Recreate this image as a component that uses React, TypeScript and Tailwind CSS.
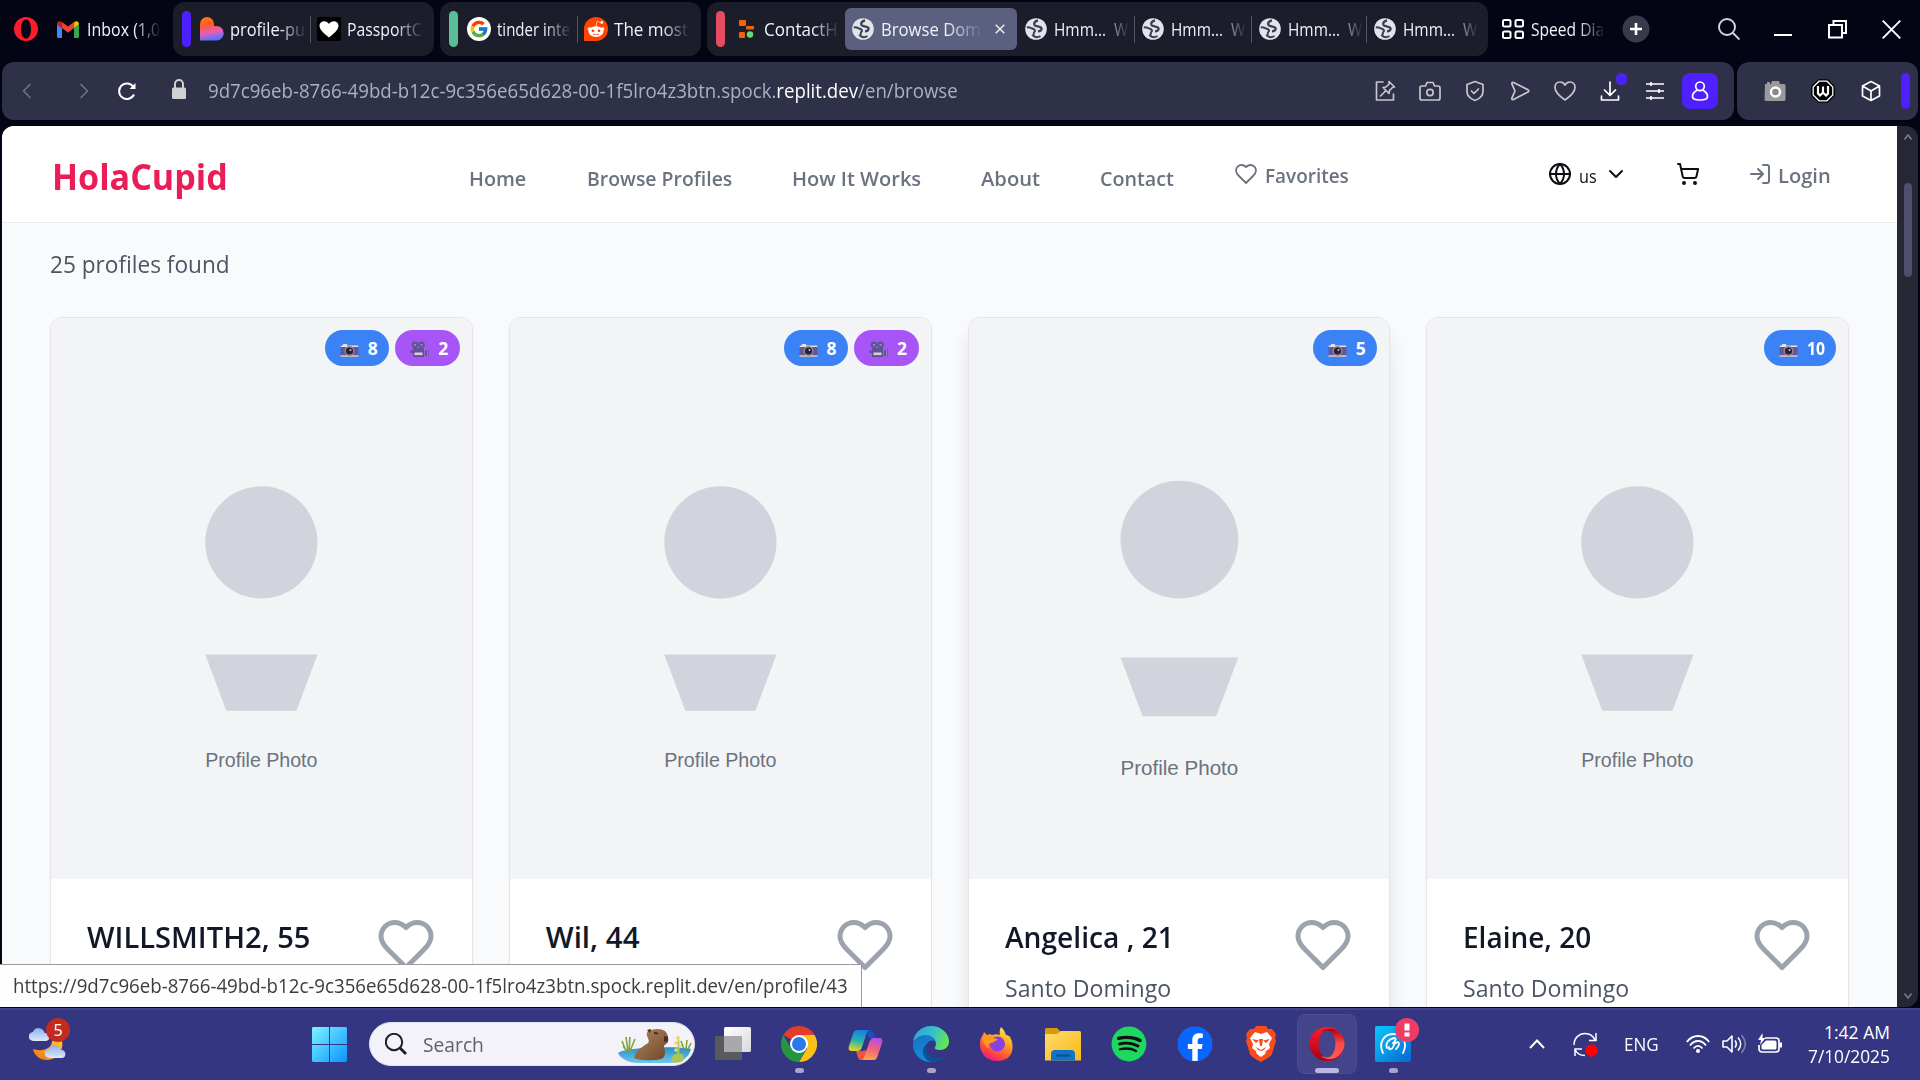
import { useLayoutEffect, useRef, useState, type ReactNode } from "react";
import { FcGoogle } from "react-icons/fc";
import { FaSpotify, FaFacebook, FaRedditAlien } from "react-icons/fa";

/* Single line of text, condensed or stretched to the width of its box. */
function Fit({ className = "", children }: { className?: string; children: ReactNode }) {
  const box = useRef<HTMLDivElement>(null);
  const line = useRef<HTMLSpanElement>(null);
  const [ratio, setRatio] = useState(1);
  useLayoutEffect(() => {
    const measure = () => {
      if (box.current && line.current && line.current.offsetWidth > 0) {
        setRatio(box.current.clientWidth / line.current.offsetWidth);
      }
    };
    measure();
    const observer = new ResizeObserver(measure);
    if (box.current) observer.observe(box.current);
    if (line.current) observer.observe(line.current);
    window.addEventListener("load", measure);
    return () => {
      observer.disconnect();
      window.removeEventListener("load", measure);
    };
  }, []);
  return (
    <div ref={box} className={`shrink-0 ${className}`}>
      <span ref={line} className="inline-block origin-left whitespace-pre align-top" style={{ transform: `scaleX(${ratio})` }}>
        {children}
      </span>
    </div>
  );
}

function TabText({ className, children }: { className: string; children: ReactNode }) {
  return (
    <Fit
      className={`${className} text-[17.5px] leading-6 text-[#f1f2f6] [mask-image:linear-gradient(to_right,#000_65%,transparent_102%)]`}
    >
      {children}
    </Fit>
  );
}

function Sep({ className }: { className: string }) {
  return <div className={`h-[27px] w-px shrink-0 bg-[#55565f] ${className}`} />;
}

function OperaMark({ className }: { className: string }) {
  return (
    <svg viewBox="0 0 24 24" className={`shrink-0 ${className}`}>
      <path
        fillRule="evenodd"
        fill="#ff1b2d"
        d="M12 0a12 12 0 1 0 0 24 12 12 0 0 0 0-24zm0 2.4c3 0 5 4.2 5 9.6s-2 9.6-5 9.6S7 17.4 7 12s2-9.600 5-9.600z"
      />
    </svg>
  );
}

function Globe() {
  return (
    <svg viewBox="0 0 22 22" className="h-[22px] w-[22px] shrink-0">
      <circle cx="11" cy="11" r="10.800" fill="#e3e4ea" />
      <path
        d="M13 2.500C10 3 8.500 5 9.500 7c1 1.800 6 .8 7 3.300.5 1.700-1.500 3-3.500 3"
        fill="none"
        stroke="#3b4058"
        strokeWidth="2.400"
      />
      <path d="M1.800 9.500c2.700-.8 4 .6 6 1.200 2.200.7 3 2 1.500 3.300-.8 1-.3 2.500-1.300 3.500 2 2 5 2 7.500.5" fill="none" stroke="#3b4058" strokeWidth="2" />
    </svg>
  );
}

function TabStrip() {
  return (
    <div className="flex h-[58px] items-center">
      <OperaMark className="ml-[14px] h-6 w-6" />
      <svg viewBox="0 0 22 17" className="ml-[19px] h-[17px] w-[22px] shrink-0">
        <path d="M0 3v12.500A1.500 1.500 0 0 0 1.500 17H5V7z" fill="#4285f4" />
        <path d="M22 3v12.500a1.500 1.500 0 0 1-1.500 1.500H17V7z" fill="#34a853" />
        <path d="M17 7l5-3.700C22 .5 19.500-.8 17.200.9z" fill="#fbbc04" />
        <path d="M5 7L0 3.300C0 .5 2.500-.8 4.800.9z" fill="#c5221f" />
        <path d="M5 7V1l6 4.600L17 1v6l-6 4.700z" fill="#ea4335" />
      </svg>
      <TabText className="ml-2 w-[73px]">Inbox (1,0</TabText>

      <div className="ml-[13px] flex h-[54px] w-[261px] shrink-0 items-center rounded-xl bg-[#1b1d2b]">
        <div className="ml-[9px] h-9 w-[9px] shrink-0 rounded-full bg-[#4f20ff]" />
        <svg viewBox="0 0 24 24" className="ml-[9px] h-6 w-6 shrink-0">
          <defs>
            <linearGradient id="lov" x1=".3" y1="0" x2=".5" y2="1">
              <stop offset="0" stopColor="#ff7a00" />
              <stop offset=".35" stopColor="#ff5a3c" />
              <stop offset=".65" stopColor="#e85fb5" />
              <stop offset="1" stopColor="#4b73ff" />
            </linearGradient>
          </defs>
          <path d="M0 7a7 7 0 0 1 14 0v2h2.500a7 7 0 0 1 0 14.500H0z" fill="url(#lov)" />
        </svg>
        <TabText className="ml-[6px] w-[75px]">profile-pu</TabText>
        <Sep className="ml-[5px]" />
        <svg viewBox="0 0 24 24" className="ml-[6px] h-6 w-6 shrink-0">
          <rect width="24" height="24" rx="2" fill="#000" />
          <path d="M12 20.500C5 15 2.500 12 2.500 8.500 2.500 3.500 9.500 2.500 12 7c2.500-4.500 9.500-3.500 9.500 1.500 0 3.500-2.500 6.500-9.500 12z" fill="#fff" />
        </svg>
        <TabText className="ml-[6px] w-[75px]">PassportC</TabText>
      </div>

      <div className="ml-[6px] flex h-[54px] w-[261px] shrink-0 items-center rounded-xl bg-[#1b1d2b]">
        <div className="ml-[9px] h-9 w-[9px] shrink-0 rounded-full bg-[#59c096]" />
        <div className="ml-[9px] flex h-6 w-6 shrink-0 items-center justify-center rounded-full bg-white">
          <FcGoogle size={20} />
        </div>
        <TabText className="ml-[6px] w-[73px]">tinder inte</TabText>
        <Sep className="ml-[7px]" />
        <div className="ml-[6px] flex h-6 w-6 shrink-0 items-center justify-center rounded-full rounded-bl-sm bg-[#ff4500]">
          <FaRedditAlien size={18} color="#fff" />
        </div>
        <TabText className="ml-[6px] w-[74px]">The most</TabText>
      </div>

      <div className="ml-[6px] flex h-[54px] w-[781px] shrink-0 items-center rounded-xl bg-[#1b1d2b]">
        <div className="ml-[9px] h-9 w-[9px] shrink-0 rounded-full bg-[#e54b61]" />
        <svg viewBox="0 0 15 18" className="ml-[14px] h-[18px] w-[15px] shrink-0">
          <rect width="7" height="6" rx="1" fill="#f26207" />
          <rect x="7" y="6" width="8" height="3.500" rx="1" fill="#f26207" />
          <rect y="12" width="6" height="6" rx="1" fill="#f26207" />
          <circle cx="11" cy="14.500" r="3.200" fill="#5fd97a" />
        </svg>
        <TabText className="ml-[10px] w-[74px]">ContactH</TabText>
        <div className="ml-[7px] flex h-[42px] w-[172px] shrink-0 items-center rounded-md bg-[#5b6080]">
          <div className="ml-[7px]">
            <Globe />
          </div>
          <TabText className="ml-[7px] w-[100px]">Browse Dom</TabText>
          <svg viewBox="0 0 10 10" className="ml-[14px] h-[10px] w-[10px] shrink-0">
            <path d="M.7.7l8.600 8.600M9.300.7L.7 9.300" stroke="#f1f2f6" strokeWidth="1.400" />
          </svg>
        </div>
        <div className="w-[1px]" />
        {[0, 1, 2, 3].map((i) => (
          <div key={i} className="flex items-center">
            <div className="ml-[7px]">
              <Globe />
            </div>
            <TabText className="ml-[7px] w-[74px]">{"Hmm...  W"}</TabText>
            {i < 3 && <Sep className={i === 2 ? "ml-[4px]" : "ml-[6px]"} />}
          </div>
        ))}
      </div>

      <svg viewBox="0 0 22 20" className="ml-[14px] h-5 w-[22px] shrink-0" fill="none" stroke="#fff" strokeWidth="2">
        <rect x="1" y="1" width="7.500" height="6.500" rx="1.500" />
        <rect x="13.500" y="1" width="7.500" height="6.500" rx="1.500" />
        <rect x="1" y="12.500" width="7.500" height="6.500" rx="1.500" />
        <rect x="13.500" y="12.500" width="7.500" height="6.500" rx="1.500" />
      </svg>
      <TabText className="ml-[7px] w-[73px]">Speed Dia</TabText>
      <svg viewBox="0 0 28 28" className="ml-[18px] h-7 w-7 shrink-0">
        <circle cx="14" cy="14" r="13.500" fill="#373a48" />
        <path d="M14 8v12M8 14h12" stroke="#fff" strokeWidth="2.600" />
      </svg>
      <svg viewBox="0 0 22 22" className="ml-[68px] h-[22px] w-[22px] shrink-0" fill="none" stroke="#d5d6dc" strokeWidth="1.900">
        <circle cx="9" cy="9" r="8" />
        <path d="M15 15l6.500 6.500" />
      </svg>
      <svg viewBox="0 0 18 14" className="ml-[34px] h-[14px] w-[18px] shrink-0">
        <path d="M0 13h18" stroke="#fff" strokeWidth="2" />
      </svg>
      <svg viewBox="0 0 19 19" className="ml-[36px] h-[19px] w-[19px] shrink-0" fill="none" stroke="#fff" strokeWidth="2">
        <path d="M1 5h13v12.500H1zM5.500 5V1H18v12h-4" />
      </svg>
      <svg viewBox="0 0 19 19" className="ml-[35px] h-[19px] w-[19px] shrink-0" stroke="#fff" strokeWidth="1.900">
        <path d="M.7.7l17.600 17.600M18.300.7L.7 18.300" />
      </svg>
    </div>
  );
}

function ToolIcon({ children, bright = false }: { children: ReactNode; bright?: boolean }) {
  return (
    <svg
      viewBox="0 0 24 24"
      className={`h-6 w-6 shrink-0 ${bright ? "text-white" : "text-[#c6c7c9]"}`}
      fill="none"
      stroke="currentColor"
      strokeWidth="1.700"
      strokeLinejoin="round"
      strokeLinecap="round"
    >
      {children}
    </svg>
  );
}

function AddressRow() {
  return (
    <div className="mt-1 flex h-[58px] gap-[3px] pl-[2px]">
      <div className="flex w-[1732px] items-center rounded-xl bg-[#2e3148] pr-4">
        <svg viewBox="0 0 10 16" className="ml-5 h-4 w-[10px]" fill="none" stroke="#72758a" strokeWidth="1.500">
          <path d="M8.500 1l-7 7 7 7" />
        </svg>
        <svg viewBox="0 0 10 16" className="ml-[47px] h-4 w-[10px]" fill="none" stroke="#72758a" strokeWidth="1.500">
          <path d="M1.500 1l7 7-7 7" />
        </svg>
        <svg viewBox="0 0 18 18" className="ml-[29px] h-[18px] w-[18px]" fill="none" stroke="#fff" strokeWidth="2">
          <path d="M16 12.500A7.800 7.800 0 1 1 15.500 5" />
          <path d="M17.500 1v6h-6z" fill="#fff" stroke="none" />
        </svg>
        <svg viewBox="0 0 14 20" className="ml-[36px] mb-1 h-5 w-[14px]">
          <rect y="8.500" width="14" height="11.500" rx="1.500" fill="#ced0d1" />
          <path d="M3 9V5a4 4 0 0 1 8 0v4" fill="none" stroke="#ced0d1" strokeWidth="2" />
        </svg>
        <Fit className="ml-[22px] w-[750px] text-[19.500px] leading-7 text-[#a9b1c6]">
          9d7c96eb-8766-49bd-b12c-9c356e65d628-00-1f5lro4z3btn.spock.<span className="text-white">replit.dev</span>/en/browse
        </Fit>
        <div className="ml-auto flex items-center gap-[21px]">
          <ToolIcon>
            <path d="M10 3H3.500v18h17v-6" />
            <path d="M16 2.500l5.500 5.500-2 .5-3 3-.5 3-6-6 3-.5 3-3zM13 11.500L7.500 17" />
          </ToolIcon>
          <ToolIcon>
            <path d="M4 7h3.500L9 3.500h6L16.500 7H20a2 2 0 0 1 2 2v10a2 2 0 0 1-2 2H4a2 2 0 0 1-2-2V9a2 2 0 0 1 2-2z" />
            <circle cx="12" cy="13.500" r="3.200" />
          </ToolIcon>
          <ToolIcon>
            <path d="M12 2.500l8 3v7c0 4.500-4 7.500-8 9-4-1.500-8-4.500-8-9v-7z" />
            <path d="M8.500 12l2.500 2.500 4.500-4.500" />
          </ToolIcon>
          <ToolIcon>
            <path d="M4 5.200c-.5-1.500.3-2.200 1.500-1.700L20 10.800c1 .5 1 1.700 0 2.200L5.500 20.500c-1.200.5-2-.2-1.500-1.700L7 12z" />
          </ToolIcon>
          <ToolIcon>
            <path d="M12 21C5.500 16.500 2 13 2 8.500 2 5 4.300 3 7 3c2.200 0 4 1 5 3 1-2 2.800-3 5-3 2.700 0 5 2 5 5.500 0 4.500-3.500 8-10 12.500z" />
          </ToolIcon>
          <div className="relative">
            <ToolIcon bright>
              <path d="M12 3v13M6.500 11l5.500 5.500 5.500-5.500M3.500 17v4h17v-4" />
            </ToolIcon>
            <div className="absolute -top-[6px] left-[18px] h-3 w-[11px] rounded-full bg-[#4f20ff]" />
          </div>
          <ToolIcon bright>
            <path d="M3 5h18M3 12h18M3 19h18M8 3v4M16 10v4M8 17v4" strokeLinecap="butt" />
          </ToolIcon>
        </div>
        <div className="ml-[15px] flex h-9 w-9 items-center justify-center rounded-lg bg-[#4f20ff]">
          <ToolIcon bright>
            <circle cx="12" cy="7.300" r="4.300" />
            <path d="M8.500 11.500c-2.500 1.500-4 4-4 6 0 2.500 3 3.500 7.500 3.500s7.500-1 7.500-3.500c0-2-1.500-4.500-4-6" />
          </ToolIcon>
        </div>
      </div>
      <div className="flex w-[181px] items-center rounded-xl bg-[#2e3148]">
        <svg viewBox="0 0 24 24" className="ml-[26px] h-6 w-6">
          <path d="M2 5h2V3h3v2h1l1-3h7l1 3h4a1.500 1.500 0 0 1 1.500 1.500v14A1.500 1.500 0 0 1 21 22H3a1.500 1.500 0 0 1-1.500-1.500z" fill="#9a9a9c" />
          <circle cx="12.500" cy="13" r="4.500" fill="#8a8a8c" stroke="#fff" strokeWidth="2.500" />
        </svg>
        <svg viewBox="0 0 24 24" className="ml-6 h-6 w-6">
          <path d="M7.500 1h9L23 7.500v9L16.500 23h-9L1 16.500v-9z" fill="#000" stroke="#000" strokeWidth="1.500" />
          <path d="M8 2.200h8L21.800 8v8L16 21.800H8L2.200 16V8z" fill="none" stroke="#fff" strokeWidth="1.300" />
          <path d="M7 7v7.500l2 2 3-3 3 3 2-2V7M12 7.500v6" fill="none" stroke="#fff" strokeWidth="2.200" />
        </svg>
        <div className="ml-6">
          <ToolIcon bright>
            <path d="M12 2.500l8.500 4.500v10L12 21.500 3.500 17V7zM3.500 7l8.500 5 8.500-5M12 12v9.500" />
          </ToolIcon>
        </div>
        <div className="ml-[18px] h-9 w-[9px] rounded-full bg-[#4f20ff]" />
      </div>
    </div>
  );
}

const HEART =
  "M19 14c1.490-1.460 3-3.210 3-5.500A5.500 5.500 0 0 0 16.500 3c-1.760 0-3 .5-4.500 2-1.500-1.500-2.740-2-4.500-2A5.500 5.500 0 0 0 2 8.500c0 2.300 1.500 4.050 3 5.500l7 7Z";

function LineIcon({ className, children }: { className: string; children: ReactNode }) {
  return (
    <svg
      viewBox="0 0 24 24"
      className={`shrink-0 ${className}`}
      fill="none"
      stroke="currentColor"
      strokeWidth="2"
      strokeLinecap="round"
      strokeLinejoin="round"
    >
      {children}
    </svg>
  );
}

function SiteHeader() {
  return (
    <header className="flex h-[97px] items-center border-b border-[#e9ebef] bg-white text-[20.500px] font-semibold text-[#6b7280]">
      <Fit className="ml-[50px] mt-[5px] w-[176px] text-[36px] leading-[48px] font-bold text-[#ec1c56]">HolaCupid</Fit>
      <nav className="mt-[8px] flex items-center">
        <Fit className="ml-[241px] w-[57px]">Home</Fit>
        <Fit className="ml-[61px] w-[145px]">Browse Profiles</Fit>
        <Fit className="ml-[60px] w-[129px]">How It Works</Fit>
        <Fit className="ml-[60px] w-[59px]">About</Fit>
        <Fit className="ml-[60px] w-[74px]">Contact</Fit>
      </nav>
      <LineIcon className="ml-[60px] h-6 w-6">
        <path d={HEART} strokeWidth="1.800" />
      </LineIcon>
      <Fit className="ml-[7px] mt-[3px] w-[84px]">Favorites</Fit>
      <LineIcon className="ml-[199px] h-6 w-6 text-[#0b0f14]">
        <circle cx="12" cy="12" r="10" />
        <path d="M12 2a14.500 14.500 0 0 0 0 20 14.500 14.500 0 0 0 0-20M2 12h20" />
      </LineIcon>
      <Fit className="ml-[7px] mt-1 w-[18px] text-[18px] font-normal text-[#0b0f14]">us</Fit>
      <LineIcon className="ml-[7px] h-6 w-6 text-[#0b0f14]">
        <path d="m6 9 6 6 6-6" />
      </LineIcon>
      <LineIcon className="ml-[48px] h-6 w-6 text-[#0b0f14]">
        <circle cx="8" cy="21" r="1" />
        <circle cx="19" cy="21" r="1" />
        <path d="M2.050 2.050h2l2.660 12.420a2 2 0 0 0 2 1.580h9.780a2 2 0 0 0 1.950-1.570l1.650-7.430H5.120" />
      </LineIcon>
      <LineIcon className="ml-[48px] h-6 w-6">
        <path d="M15 3h4a2 2 0 0 1 2 2v14a2 2 0 0 1-2 2h-4M10 17l5-5-5-5M15 12H3" />
      </LineIcon>
      <Fit className="ml-[6px] mt-[3px] w-[53px]">Login</Fit>
    </header>
  );
}

function PhotoEmoji() {
  return (
    <svg viewBox="0 0 19 15" className="mt-1 h-[15px] w-[19px] shrink-0">
      <path d="M1 2.500h2V1h4v1.500h11l.5 2H.5z" fill="#e6e3e2" />
      <rect x=".5" y="4" width="18" height="8.500" fill="#65569a" />
      <rect x=".5" y="12" width="18" height="2" rx=".5" fill="#b9b5bf" />
      <circle cx="9.500" cy="8" r="5" fill="#8f8890" />
      <circle cx="9.500" cy="8" r="3.600" fill="#2a1f37" />
      <circle cx="10.500" cy="6.900" r="1" fill="#cfc3e0" />
    </svg>
  );
}

function MovieEmoji() {
  return (
    <svg viewBox="0 0 19 17" className="mt-[3px] h-[17px] w-[19px] shrink-0">
      <circle cx="5" cy="3.800" r="3.300" fill="#5d5396" />
      <circle cx="11.500" cy="3.800" r="3.300" fill="#5d5396" />
      <circle cx="5" cy="3.800" r="1.100" fill="#9b8fc0" />
      <circle cx="11.500" cy="3.800" r="1.100" fill="#9b8fc0" />
      <path d="M3 7h11v9H3zM15 10l3.500-2v8.500L15 14.500zM.5 9.500H3V12H.5z" fill="#5d5396" />
      <rect x="4.500" y="11.500" width="8" height="2.600" fill="#e4c9d8" />
      <path d="M17.500 8.500v8" stroke="#8a83a8" />
    </svg>
  );
}

function Badge({ kind, count }: { kind: "photo" | "video"; count: string }) {
  return (
    <div
      className={`flex h-9 items-center gap-[9px] rounded-full pr-[12px] pl-[15px] text-[17.500px] font-bold text-white ${
        kind === "photo" ? "bg-[#3b82f6]" : "bg-[#a855f7]"
      }`}
    >
      {kind === "photo" ? <PhotoEmoji /> : <MovieEmoji />}
      <Fit className={count.length > 1 ? "w-[17.500px]" : "w-[9.500px]"}>{count}</Fit>
    </div>
  );
}

type Profile = { name: string; nameWidth: string; city?: string; photos: string; videos?: string; hovered?: boolean };

const profiles: Profile[] = [
  { name: "WILLSMITH2, 55", nameWidth: "w-[223px]", photos: "8", videos: "2" },
  { name: "Wil, 44", nameWidth: "w-[94px]", photos: "8", videos: "2" },
  { name: "Angelica , 21", nameWidth: "w-[169px]", city: "Santo Domingo", photos: "5", hovered: true },
  { name: "Elaine, 20", nameWidth: "w-[128px]", city: "Santo Domingo", photos: "10" },
];

function ProfileCard({ profile }: { profile: Profile }) {
  return (
    <article
      className={`h-[800px] overflow-hidden rounded-xl border border-[#e5e5e7] bg-white ${
        profile.hovered ? "shadow-[0_15px_23px_-4px_rgba(0,0,0,0.12),0_6px_9px_-6px_rgba(0,0,0,0.1)]" : "shadow-[0_1px_3px_rgba(0,0,0,0.05)]"
      }`}
    >
      <div className="relative h-[561px] overflow-hidden bg-[#f3f4f6]">
        <svg viewBox="0 0 300 400" className={`h-full w-full ${profile.hovered ? "scale-105" : ""}`}>
          <circle cx="150" cy="160" r="40" className="fill-[#d1d4dc]" />
          <path d="M110 240h80l-15 40h-50z" className="fill-[#d1d4dc]" />
          <text
            x="150"
            y="320"
            textAnchor="middle"
            textLength="80"
            className="fill-[#6b7280] font-['Liberation_Sans',Arial,sans-serif] text-[14px]"
          >
            Profile Photo
          </text>
        </svg>
        <div className="absolute top-3 right-3 flex gap-[6px]">
          <Badge kind="photo" count={profile.photos} />
          {profile.videos && <Badge kind="video" count={profile.videos} />}
        </div>
      </div>
      <div className="flex items-start justify-between p-9">
        <div>
          <Fit className={`${profile.nameWidth} text-[29.500px] leading-[43px] font-semibold text-[#111827]`}>{profile.name}</Fit>
          {profile.city && <Fit className="mt-3 w-[166px] text-[23.500px] leading-9 text-[#4b5563]">{profile.city}</Fit>}
        </div>
        <LineIcon className="h-[60px] w-[60px] text-[#9ca3af]">
          <path d={HEART} />
        </LineIcon>
      </div>
    </article>
  );
}

function BrowserPage() {
  return (
    <div className="relative mt-[6px] flex h-[881px] pl-[2px]">
      <div className="w-[1895px] shrink-0 overflow-hidden rounded-tl-xl bg-[#f9fafc]">
        <SiteHeader />
        <main className="px-12 pt-[23px]">
          <Fit className="mb-[35px] w-[180px] text-[23.500px] leading-9 text-[#4b5563]">25 profiles found</Fit>
          <div className="grid grid-cols-4 gap-9">
            {profiles.map((p) => (
              <ProfileCard key={p.name} profile={p} />
            ))}
          </div>
        </main>
      </div>
      <div className="flex w-[21px] flex-col items-center justify-between rounded-r-xl bg-[#252834] py-2">
        <svg viewBox="0 0 8 6" className="h-[6px] w-2" fill="none" stroke="#777984" strokeWidth="1.600">
          <path d="M.5 5.500L4 1l3.500 4.500" />
        </svg>
        <div className="mt-[43px] mb-auto h-[94px] w-2 rounded-full bg-[#4d4f6c]" />
        <svg viewBox="0 0 8 6" className="h-[6px] w-2" fill="none" stroke="#777984" strokeWidth="1.600">
          <path d="M.5.5L4 5 7.500.5" />
        </svg>
      </div>
      <div className="absolute bottom-0 left-0 flex h-[43px] w-[862px] items-center border-t border-r border-[#9a9a9a] bg-[#fefefe] text-[#3c3c3c]">
        <Fit className="ml-[13px] w-[835px] text-[19.500px] leading-7">
          https://9d7c96eb-8766-49bd-b12c-9c356e65d628-00-1f5lro4z3btn.spock.replit.dev/en/profile/43
        </Fit>
      </div>
    </div>
  );
}

function Cloud({ x, y }: { x: number; y: number }) {
  return (
    <g transform={`translate(${x} ${y})`} fill="url(#cloud)">
      <path d="M4.500 13a4.500 4.500 0 0 1-.5-9 6 6 0 0 1 11.500 1A4 4 0 0 1 17 13z" />
    </g>
  );
}

function TaskButton({ children, active, dot }: { children: ReactNode; active?: boolean; dot?: boolean }) {
  return (
    <div className="relative flex h-9 w-9 shrink-0 items-center justify-center">
      {active && <div className="absolute -inset-x-3 -top-3 h-[60px] rounded-lg border border-[#4c4d90] bg-[#434489]" />}
      <div className="relative">{children}</div>
      {dot && <div className="absolute top-[42px] left-[14px] h-[5px] w-[9px] rounded-full bg-[#a6a5cd]" />}
      {active && <div className="absolute top-[42px] left-[6px] h-[5px] w-6 rounded-full bg-[#bdb5e6]" />}
    </div>
  );
}

function Taskbar() {
  return (
    <footer className="mt-px flex h-[72px] items-center border-t-2 border-[#42438a] bg-[#353681] pb-[2px] text-white">
      <div className="relative ml-[29px] h-[38px] w-10 shrink-0">
        <svg viewBox="0 0 40 40" className="h-10 w-10">
          <defs>
            <linearGradient id="cloud" x1="0" y1="0" x2="0" y2="1">
              <stop offset="0" stopColor="#8fb1f0" />
              <stop offset="1" stopColor="#dde8fb" />
            </linearGradient>
            <linearGradient id="moon" x1="1" y1="0" x2="0" y2="1">
              <stop offset="0" stopColor="#ffc933" />
              <stop offset="1" stopColor="#ee7110" />
            </linearGradient>
          </defs>
          <Cloud x={0} y={3} />
          <path d="M33 16c2 10-5 19-15 19-8 0-13-5-14-11 9 3 19 0 19-8z" fill="url(#moon)" />
          <Cloud x={16} y={20} />
        </svg>
        <div className="absolute -top-[7px] left-[17px] flex h-6 w-6 items-center justify-center rounded-full bg-[#c42b1c] text-[16px]">5</div>
      </div>
      <svg viewBox="0 0 35 35" className="ml-[243px] h-[35px] w-[35px] shrink-0">
        <defs>
          <linearGradient id="win" x1="0" y1="0" x2="1" y2="1">
            <stop offset="0" stopColor="#7df5ff" />
            <stop offset="1" stopColor="#0a93ff" />
          </linearGradient>
        </defs>
        <path d="M1 0h16v17H0V1zM18 0h16l1 1v16H18zM0 18h17v17H1l-1-1zM18 18h17v16l-1 1H18z" fill="url(#win)" />
      </svg>
      <div className="ml-[22px] flex h-11 w-[326px] shrink-0 items-center overflow-hidden rounded-full border border-[#e3e2f0] bg-[#f3f2f8]">
        <svg viewBox="0 0 22 22" className="ml-[15px] h-[22px] w-[22px]" fill="none" stroke="#1f1f24">
          <circle cx="9" cy="9" r="8.200" strokeWidth="2" />
          <path d="M15 15l6 6" strokeWidth="2.800" />
        </svg>
        <Fit className="ml-4 w-[61px] text-[20.500px] leading-8 text-[#606068]">Search</Fit>
        <svg viewBox="0 0 76 40" className="ml-auto h-10 w-[76px]">
          <defs>
            <linearGradient id="capy" x1="0" y1="0" x2="1" y2="1">
              <stop offset="0" stopColor="#b58a63" />
              <stop offset="1" stopColor="#6b4526" />
            </linearGradient>
            <linearGradient id="water" x1="0" y1="0" x2="0" y2="1">
              <stop offset="0" stopColor="#2b8ec4" />
              <stop offset="1" stopColor="#6cc9ee" />
            </linearGradient>
          </defs>
          <path d="M0 29c8-6 60-7 73-4-2 8-8 13-20 14H20C10 39 2 34 0 29z" fill="url(#water)" />
          <g stroke="#7fa53a" strokeWidth="1.600" fill="none">
            <path d="M8 27L4 17M10 27L8 13M11 27l1-14M12 27l5-12M66 25l-3-8M68 25l1-9M70 25l3-6M9 27l-4-5" />
          </g>
          <path
            d="M16 34c2-8 8-11 14-15 2-2 0-4-1-7-1-3 1-6 4-6 6-2 11-1 14 1 3 3 4 8 3 11-1 2-4 2-4 5 1 4 2 8-1 11-4 3-24 3-29 0z"
            fill="url(#capy)"
          />
          <path d="M29 6l4-1-1 4zM46 12l4 1v4l-4 1z" fill="#49301f" />
          <path d="M36 9l4 .5" stroke="#2c1b10" strokeWidth="1.300" />
          <path d="M54 38c-2-5 1-8 5-8 1-6 0-12 1-18 2 6 2 12 1 18 4-1 6 1 4 7-3 2-8 2-11 1z" fill="#a8c65a" />
          <g fill="#f2d578">
            <circle cx="60" cy="14" r="2" />
            <circle cx="58" cy="19" r="1.800" />
            <circle cx="62" cy="22" r="1.800" />
            <circle cx="58" cy="26" r="1.800" />
          </g>
        </svg>
      </div>
      <div className="ml-5 flex gap-[30px]">
        <TaskButton>
          <svg viewBox="0 0 36 36" className="h-9 w-9">
            <defs>
              <linearGradient id="tv" x1="0" y1="0" x2="1" y2="1">
                <stop offset="0" stopColor="#fff" />
                <stop offset="1" stopColor="#d9d9dd" />
              </linearGradient>
            </defs>
            <rect y="10" width="27" height="24" rx="1.500" fill="#5a5a5c" />
            <rect x="9" y="1" width="27" height="25" rx="1.500" fill="url(#tv)" />
            <path d="M9 10h18v16H9z" fill="#a9a9ab" />
          </svg>
        </TaskButton>
        <TaskButton dot>
          <svg viewBox="0 0 36 36" className="h-9 w-9">
            <path d="M18 18L2.400 9A18 18 0 0 1 33.600 9z" fill="#e33b2e" />
            <path d="M18 9h15.600A18 18 0 0 1 18 36l8-13.500z" fill="#fbc116" />
            <path d="M10.200 22.500L2.400 9A18 18 0 0 0 18 36l7.800-13.500z" fill="#25953e" />
            <circle cx="18" cy="18" r="9" fill="#fff" />
            <circle cx="18" cy="18" r="7" fill="#2a78e9" />
          </svg>
        </TaskButton>
        <TaskButton>
          <svg viewBox="0 0 36 36" className="h-9 w-9">
            <defs>
              <linearGradient id="cp1" x1=".5" y1="0" x2=".3" y2="1">
                <stop offset="0" stopColor="#1a80e0" />
                <stop offset=".5" stopColor="#25b3b0" />
                <stop offset="1" stopColor="#e9d51c" />
              </linearGradient>
              <linearGradient id="cp2" x1=".7" y1="0" x2=".4" y2="1">
                <stop offset="0" stopColor="#b04df0" />
                <stop offset=".5" stopColor="#f0637f" />
                <stop offset="1" stopColor="#ffa04a" />
              </linearGradient>
            </defs>
            <path d="M22 4c3 0 4 1 5 4l1.500 4h-6L20 8z" fill="#1a4fc4" />
            <path d="M10 4h13c-2 0-3 2-4 5l-4 12c-1 3-2 4-5 4H5c-3 0-4-2-3-5l4-12c1-3 2-4 4-4z" fill="url(#cp1)" />
            <path d="M9 25h7l3-1 3 10H14c-3 0-3-3-5-9z" fill="#f0553a" />
            <path d="M27 34H14c2 0 3-2 4-5l4-12c1-3 2-5 5-5h5c3 0 4 2 3 5l-4 12c-1 3-2 5-4 5z" fill="url(#cp2)" />
          </svg>
        </TaskButton>
        <TaskButton dot>
          <svg viewBox="0 0 36 36" className="h-9 w-9">
            <defs>
              <linearGradient id="ed1" x1="0" y1=".3" x2="1" y2=".6">
                <stop offset="0" stopColor="#2aa3dc" />
                <stop offset=".5" stopColor="#35c1c9" />
                <stop offset="1" stopColor="#68e84c" />
              </linearGradient>
              <linearGradient id="ed2" x1="0" y1="0" x2=".5" y2="1">
                <stop offset="0" stopColor="#1a6fc0" />
                <stop offset="1" stopColor="#118fe0" />
              </linearGradient>
            </defs>
            <path d="M0 16C1 7 8 0 18 0c11 0 18 8 18 15 0 6-4 9-9 9-4 0-6-1-5-3 3-4-1-10-8-10C7 11 2 13 0 16z" fill="url(#ed1)" />
            <path d="M0 17c2-5 7-8 13-8 5 0 9 3 10 7-3-3-9-1-10 4-1 6 4 14 10 15-13 4-24-6-23-18z" fill="url(#ed2)" />
            <path d="M14 18c-3 8 4 14 11 14 4 0 7-2 9-5-2 5-8 9-15 9C9 34 7 22 14 18z" fill="#104f96" />
          </svg>
        </TaskButton>
        <TaskButton>
          <svg viewBox="0 0 36 36" className="h-9 w-9">
            <defs>
              <linearGradient id="ff" x1=".8" y1="0" x2=".3" y2="1">
                <stop offset="0" stopColor="#fff14a" />
                <stop offset=".4" stopColor="#ffa01e" />
                <stop offset=".75" stopColor="#ff4a3c" />
                <stop offset="1" stopColor="#e8178a" />
              </linearGradient>
            </defs>
            <path d="M22 1c3 3 4 5 5 8 2 0 3 1 4 2 5 9 4 24-13 24C7 35 1 27 1 18c0-4 1-7 3-9l1-3 3 3c2-1 4-1 5 0 3-1 6-1 8 0-1-3 0-6 1-8z" fill="url(#ff)" />
            <circle cx="18.500" cy="18" r="7.500" fill="#8a3fe0" />
            <path d="M4 10c4-1 8 0 10 2 3 0 4 1 5 2-3 0-4 3-7 3s-4 3-1 6c-5-2-8-7-7-13z" fill="#ff9720" />
          </svg>
        </TaskButton>
        <TaskButton>
          <svg viewBox="0 0 36 36" className="h-9 w-9">
            <defs>
              <linearGradient id="fold" x1="0" y1="0" x2="1" y2="1">
                <stop offset="0" stopColor="#ffdb6e" />
                <stop offset="1" stopColor="#f9b917" />
              </linearGradient>
            </defs>
            <path d="M0 3.500A1.500 1.500 0 0 1 1.500 2H12l4 4v6H0z" fill="#dc9a07" />
            <path d="M0 8h12l4-3h18.500A1.500 1.500 0 0 1 36 6.500v28H0z" fill="url(#fold)" />
            <path d="M6 34.500V28a4 4 0 0 1 4-4h16a4 4 0 0 1 4 4v6.500z" fill="#0f73c9" />
            <path d="M11 29.500h14" stroke="#0a4d8e" strokeWidth="2" />
          </svg>
        </TaskButton>
        <TaskButton>
          <div className="flex h-9 w-9 items-center justify-center">
            <div className="flex h-[34px] w-[34px] items-center justify-center rounded-full bg-[#101010]">
              <FaSpotify size={36} color="#1ed760" className="shrink-0" />
            </div>
          </div>
        </TaskButton>
        <TaskButton>
          <div className="flex h-9 w-9 items-center justify-center">
            <div className="flex h-[34px] w-[34px] items-center justify-center rounded-full bg-white">
              <FaFacebook size={36} color="#0866ff" className="shrink-0" />
            </div>
          </div>
        </TaskButton>
        <TaskButton>
          <svg viewBox="0 0 36 36" className="h-9 w-9">
            <path d="M7 3h4l2-3h10l2 3h4l4 5-1 4 1 3-4 13c-1 3-6 5-11 8-5-3-10-5-11-8L3 15l1-3-1-4z" fill="#fb4a1c" />
            <path d="M18 8l6-2 5 6-3 6 1 4-5 4h-8l-5-4 1-4-3-6 5-6zM13 26l5-1.500 5 1.500-1 2-4 3-4-3z" fill="#fff" />
            <path d="M9 13l7 1.500-3 2.500zM27 13l-7 1.500 3 2.500zM16 13h4l-1 7h-2zM13 21l5 3 5-3-2 3-3 1-3-1z" fill="#fb4a1c" />
          </svg>
        </TaskButton>
        <TaskButton active>
          <svg viewBox="0 0 36 36" className="h-9 w-9">
            <defs>
              <linearGradient id="op" x1="0" y1="0" x2="0" y2="1">
                <stop offset="0" stopColor="#ff1b2d" />
                <stop offset="1" stopColor="#a70014" />
              </linearGradient>
              <linearGradient id="op2" x1="0" y1="0" x2="0" y2="1">
                <stop offset="0" stopColor="#a8000f" />
                <stop offset=".5" stopColor="#ff4b4b" />
                <stop offset="1" stopColor="#ff5a52" />
              </linearGradient>
            </defs>
            <ellipse cx="18" cy="18" rx="17.500" ry="17" fill="url(#op)" />
            <path d="M12 6c4-4 12-4 16-1 10 7 10 19 0 26-4 3-12 3-16-1 5 2 12 0 12-12S17 4 12 6z" fill="url(#op2)" />
            <ellipse cx="18" cy="18" rx="8.500" ry="13.500" fill="#434489" />
          </svg>
        </TaskButton>
        <TaskButton dot>
          <svg viewBox="0 0 36 36" className="h-9 w-9">
            <defs>
              <linearGradient id="fp" x1="0" y1="0" x2="1" y2="1">
                <stop offset="0" stopColor="#0cc6ff" />
                <stop offset="1" stopColor="#0668cf" />
              </linearGradient>
            </defs>
            <rect width="36" height="36" rx="2" fill="url(#fp)" />
            <g fill="none" stroke="#fff" strokeWidth="1.800" strokeLinecap="round">
              <path d="M8 27C3 17 9 8 18 8c10 0 15 9 10 19" />
              <path d="M12 22c-2-5 2-9 7-10 3 0 1 4-1 5M14 21c-1 3 3 3 4 0 1-4 6-7 6-3 0 2-2 4-3 5" />
            </g>
          </svg>
          <div className="absolute -top-[8px] left-[20px] h-6 w-6 rounded-full bg-[#ef3c62]">
            <svg viewBox="0 0 24 24" className="h-6 w-6" fill="#fff">
              <path d="M9.500 5.500h5v7h-5zM9.500 14.500h5v4h-5z" />
            </svg>
          </div>
        </TaskButton>
      </div>
      <svg viewBox="0 0 16 10" className="ml-[118px] h-[10px] w-4 shrink-0" fill="none" stroke="#fff" strokeWidth="2">
        <path d="M1 9l7-7.500L15 9" />
      </svg>
      <svg viewBox="0 0 25 25" className="ml-7 h-[25px] w-[25px] shrink-0" fill="none" stroke="#fff" strokeWidth="1.500">
        <path d="M1 13C1 6 6 1.500 12 1.500c4 0 8 2 10 6.500M23 1v7.500h-7M2 24v-7h7M2 17.500c2 4 5 6 10 6" />
        <circle cx="18.500" cy="18.500" r="6.200" fill="#f00" stroke="none" />
      </svg>
      <Fit className="ml-[26px] w-[35px] text-[17.500px] leading-6">ENG</Fit>
      <svg viewBox="0 0 24 20" className="ml-[27px] h-5 w-6 shrink-0" fill="none" stroke="#fff" strokeWidth="1.800">
        <path d="M.8 8c6-8 16.400-8 22.400 0M4 11.500c4.500-6 11.500-6 16 0M7.500 14.500c3-3.500 6-3.500 9 0" />
        <circle cx="12" cy="17" r="2" fill="#fff" stroke="none" />
      </svg>
      <svg viewBox="0 0 24 22" className="ml-3 h-[22px] w-6 shrink-0" fill="none" stroke="#fff" strokeWidth="1.600" strokeLinejoin="round">
        <path d="M1 8v6h4l5 5V3L5 8zM13 7.500c1.500 2 1.500 5 0 7M16 4.500c3.500 4 3.500 9 0 13" />
        <path d="M19.500 2c5 6 5 12 0 18" stroke="#7d7eb0" />
      </svg>
      <svg viewBox="0 0 24 22" className="ml-3 h-[22px] w-6 shrink-0">
        <path d="M7 5h11a3 3 0 0 1 3 3v8a3 3 0 0 1-3 3H4a3 3 0 0 1-3-3v-4" fill="none" stroke="#fff" strokeWidth="1.700" />
        <path d="M8 7.500h9a1.500 1.500 0 0 1 1.500 1.500v6a1.500 1.500 0 0 1-1.500 1.500H5A1.500 1.500 0 0 1 3.500 15v-3zM21.500 9.500H24v5h-2.500zM4.500 0L0 7h3l-1 5 5.500-7H4.500z" fill="#fff" />
      </svg>
      <div className="ml-[26px] flex w-[82px] shrink-0 flex-col items-end text-[17.500px] leading-6">
        <Fit className="w-[66px]">1:42 AM</Fit>
        <Fit className="w-[82px]">7/10/2025</Fit>
      </div>
    </footer>
  );
}

export default function App() {
  return (
    <div className="h-[1080px] w-[1920px] overflow-hidden bg-[#030515] font-['Open_Sans','Noto_Sans',sans-serif]">
      <TabStrip />
      <AddressRow />
      <BrowserPage />
      <Taskbar />
    </div>
  );
}
